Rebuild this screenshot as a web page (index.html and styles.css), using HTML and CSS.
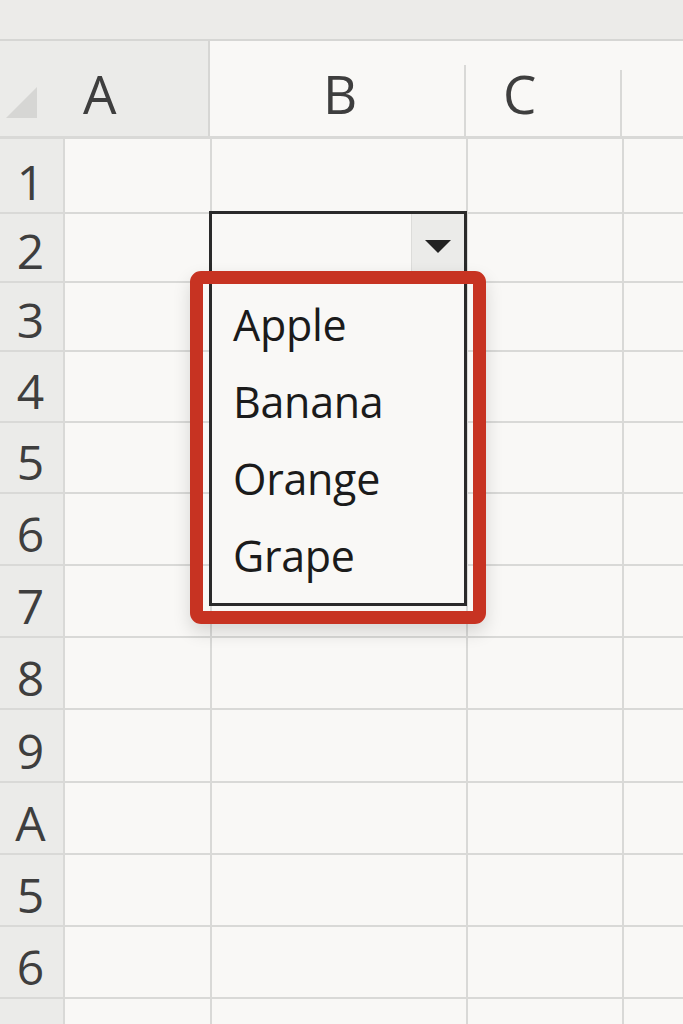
FILE: index.html
```html
<!DOCTYPE html>
<html lang="en">
<head>
<meta charset="utf-8">
<title>Dropdown list</title>
<link rel="stylesheet" href="styles.css">
</head>
<body>
<div class="sheet">
  <div class="topbar"></div>
  <div class="col-header">
    <div class="corner">
      <svg class="select-all" width="31" height="31" viewBox="0 0 31 31"><polygon points="31,0 31,31 0,31" fill="#d6d6d4"/></svg>
      <span class="corner-letter">A</span>
    </div>
    <div class="hcell hcell-b">B</div>
    <div class="hcell hcell-c">C</div>
    <div class="hcell hcell-d"></div>
  </div>
  <div class="grid">
    <div class="rh">1</div><div class="c"></div><div class="c"></div><div class="c"></div><div class="c"></div>
    <div class="rh">2</div><div class="c"></div><div class="c"></div><div class="c"></div><div class="c"></div>
    <div class="rh">3</div><div class="c"></div><div class="c"></div><div class="c"></div><div class="c"></div>
    <div class="rh">4</div><div class="c"></div><div class="c"></div><div class="c"></div><div class="c"></div>
    <div class="rh">5</div><div class="c"></div><div class="c"></div><div class="c"></div><div class="c"></div>
    <div class="rh">6</div><div class="c"></div><div class="c"></div><div class="c"></div><div class="c"></div>
    <div class="rh">7</div><div class="c"></div><div class="c"></div><div class="c"></div><div class="c"></div>
    <div class="rh">8</div><div class="c"></div><div class="c"></div><div class="c"></div><div class="c"></div>
    <div class="rh">9</div><div class="c"></div><div class="c"></div><div class="c"></div><div class="c"></div>
    <div class="rh">A</div><div class="c"></div><div class="c"></div><div class="c"></div><div class="c"></div>
    <div class="rh">5</div><div class="c"></div><div class="c"></div><div class="c"></div><div class="c"></div>
    <div class="rh">6</div><div class="c"></div><div class="c"></div><div class="c"></div><div class="c"></div>
    <div class="rh"></div><div class="c"></div><div class="c"></div><div class="c"></div><div class="c"></div>
  </div>

  <div class="dropdown">
    <div class="dd-cell">
      <div class="dd-btn">
        <svg width="26" height="13" viewBox="0 0 26 13"><polygon points="0,0 26,0 13,13" fill="#222"/></svg>
      </div>
    </div>
    <ul class="dd-list">
      <li>Apple</li>
      <li>Banana</li>
      <li>Orange</li>
      <li>Grape</li>
    </ul>
  </div>
  <div class="highlight"></div>
</div>
</body>
</html>
```

FILE: styles.css
```css
html, body {
  margin: 0;
  padding: 0;
}
body {
  width: 683px;
  height: 1024px;
  overflow: hidden;
  background: #f9f8f6;
  font-family: "Open Sans", "Noto Sans", sans-serif;
}
.sheet {
  position: relative;
  width: 683px;
  height: 1024px;
  overflow: hidden;
}
.topbar {
  height: 39px;
  background: #ecebe9;
  border-bottom: 2px solid #d6d6d4;
}
.col-header {
  display: flex;
  height: 95px;
  border-bottom: 3px solid #d9d9d7;
  color: #3e3e3e;
  font-size: 53px;
  line-height: 53px;
}
.corner {
  width: 210px;
  flex: none;
  background: #ebebe9;
  border-right: 2px solid #d6d6d4;
  display: flex;
  align-items: flex-end;
  padding-bottom: 16px;
  box-sizing: border-box;
}
.select-all {
  display: block;
  margin: 0 0 2px 6px;
}
.corner-letter {
  margin-left: 46px;
}
.hcell {
  flex: none;
  display: flex;
  align-items: flex-end;
  padding-bottom: 16px;
  box-sizing: border-box;
  background-repeat: no-repeat;
  background-position: right bottom;
  background-image: linear-gradient(#d9d9d7, #d9d9d7);
}
.hcell-b {
  width: 256px;
  justify-content: center;
  padding-left: 4px;
  background-size: 2px 71px;
}
.hcell-c {
  width: 156px;
  padding-left: 37px;
  background-size: 2px 66px;
}
.hcell-d {
  flex: 1;
  background-image: none;
}
.grid {
  display: grid;
  grid-template-columns: 63px 145px 254px 154px 1fr;
  grid-template-rows: 73px 67px 67px 69px 69px 70px 70px 70px 71px 70px 70px 70px 40px;
  gap: 2px;
  background: #d9d9d7;
}
.c {
  background: #f9f8f6;
}
.rh {
  background: #ebebe9;
  color: #3e3e3e;
  font-size: 48px;
  line-height: 48px;
  display: flex;
  align-items: flex-end;
  justify-content: center;
  padding-bottom: 6px;
  padding-right: 2px;
}
.dropdown {
  position: absolute;
  left: 209px;
  top: 211px;
  width: 258px;
  height: 395px;
  box-sizing: border-box;
  border: 3px solid #2a2a2a;
  background: #f9f8f6;
  display: flex;
  flex-direction: column;
}
.dd-cell {
  height: 57px;
  display: flex;
  justify-content: flex-end;
  flex: none;
}
.dd-btn {
  width: 53px;
  height: 57px;
  background: #ebebe9;
  border-left: 1px solid #dcdcda;
  box-sizing: border-box;
  display: flex;
  justify-content: center;
  align-items: center;
  padding-top: 8px;
}
.dd-btn svg {
  display: block;
}
.dd-list {
  list-style: none;
  margin: 0;
  padding: 15px 0 0 21px;
  color: #1b1b1b;
  font-size: 43px;
  line-height: 77px;
  letter-spacing: -0.3px;
}
.highlight {
  position: absolute;
  left: 190px;
  top: 271px;
  width: 296px;
  height: 353px;
  box-sizing: border-box;
  border: 13px solid #c73322;
  border-radius: 11px;
  box-shadow: 0 8px 18px rgba(0, 0, 0, 0.14);
}
```
